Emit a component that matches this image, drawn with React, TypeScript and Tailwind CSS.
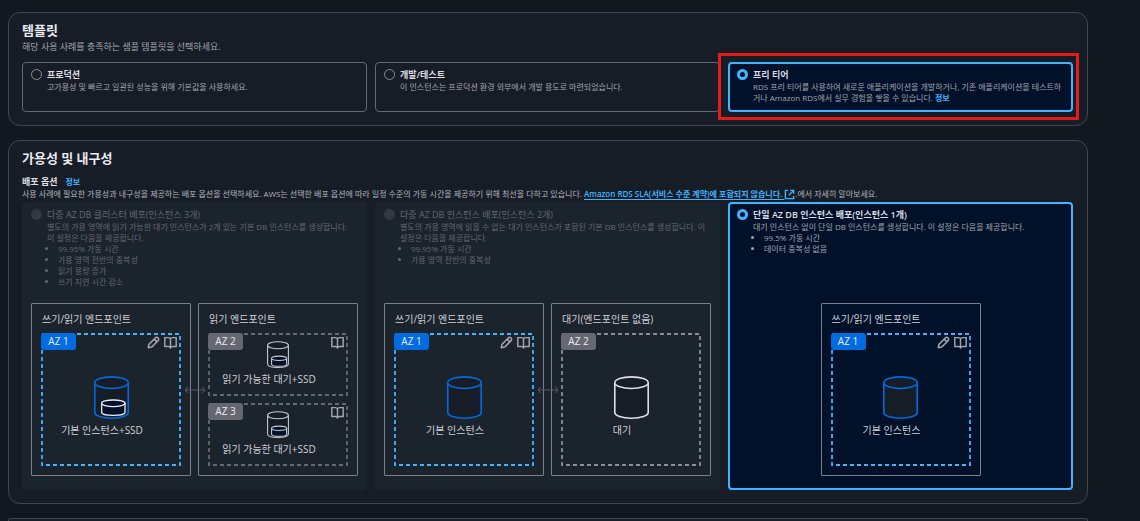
import type { ReactNode } from "react";

type Tone = "active" | "standby";

function Panel({ children }: { children: ReactNode }) {
  return (
    <section className="rounded-xl border border-[#424650] bg-[#161d26] pb-[13px] pl-[13px] pr-[14px] pt-2">
      {children}
    </section>
  );
}

function Tile({
  name,
  id,
  label,
  description,
  checked = false,
  disabled = false,
  highlighted = false,
  children,
}: {
  name: string;
  id: string;
  label: string;
  description: ReactNode;
  checked?: boolean;
  disabled?: boolean;
  highlighted?: boolean;
  children?: ReactNode;
}) {
  const box = checked
    ? "border-2 border-[#42b4ff] bg-[#001129] px-[7px] pt-1"
    : disabled
      ? "border border-[#1b232d] bg-[#1b232d] px-2 pb-px pt-[5px]"
      : "border border-[#656871] px-2 pb-px pt-[5px]";
  const radio = checked
    ? "border-[3px] border-[#42b4ff] bg-[#001129]"
    : disabled
      ? "border border-[#333843] bg-[#333843]"
      : "border border-[#8c8c94]";
  return (
    <div className={`relative flex flex-col rounded ${box}`}>
      <div className="flex gap-[5px]">
        <input
          type="radio"
          id={id}
          name={name}
          defaultChecked={checked}
          disabled={disabled}
          aria-describedby={`${id}-description`}
          className={`mt-px size-[11px] shrink-0 appearance-none rounded-full ${radio}`}
        />
        <div className="min-w-0">
          <label
            htmlFor={id}
            className={`block text-[9px] leading-[13px] ${disabled ? "text-[#656871]" : "font-semibold text-[#dedee3]"}`}
          >
            {label}
          </label>
          <div
            id={`${id}-description`}
            className={`text-[8px] leading-[11px] ${disabled ? "text-[#656871]" : "text-[#a4a4ad]"}`}
          >
            {description}
          </div>
        </div>
      </div>
      {children}
      {highlighted && (
        <div className="pointer-events-none absolute -bottom-[10px] -left-3 -right-2 -top-[11px] border-[3px] border-[#e31b1b]" />
      )}
    </div>
  );
}

function Bullets({ items }: { items: string[] }) {
  return (
    <ul className="list-disc pl-[11px]">
      {items.map((item) => (
        <li key={item}>{item}</li>
      ))}
    </ul>
  );
}

function PencilIcon() {
  return (
    <svg viewBox="0 0 16 16" className="size-[13px]" fill="none" stroke="#a4a4ad" strokeWidth="2" strokeLinejoin="round">
      <path d="M1.6 14.4l.9-4.3 7.7-7.7a2.2 2.2 0 0 1 3.4 3.4l-7.7 7.7zM8.8 3.8l3.4 3.4" />
    </svg>
  );
}

function BookIcon() {
  return (
    <svg viewBox="0 0 16 16" className="size-[13px]" fill="none" stroke="#a4a4ad" strokeWidth="1.8">
      <path d="M8 3.6C7.5 2.5 6.6 2 5.5 2H1v11h4.500c1.100 0 2 .4 2.500 1.500.5-1.100 1.400-1.500 2.500-1.500H15V2h-4.500C9.400 2 8.500 2.500 8 3.600zV15" />
    </svg>
  );
}

function ExternalIcon() {
  return (
    <svg viewBox="0 0 16 16" className="inline size-[11px] align-[-3px]" fill="none" stroke="#42b4ff" strokeWidth="2">
      <path d="M6 2H2v12h12v-4M9 2h5v5M14 2L7 9" />
    </svg>
  );
}

function Cylinder({ tone, ssd = false }: { tone: Tone; ssd?: boolean }) {
  return (
    <svg viewBox="0 0 35 43" className="h-[43px] w-[35px]" fill="#161d26" strokeWidth="1.6">
      <g stroke={tone === "active" ? "#006ce0" : "#dedee3"}>
        <path d="M.8 6.500V36.500C.8 39.600 8 42.200 17.500 42.200S34.200 39.600 34.200 36.500V6.500" />
        <ellipse cx="17.500" cy="6.700" rx="16.700" ry="5.800" />
      </g>
      {ssd && (
        <g stroke="#ebebf0" fill="#001129" strokeWidth="1.300">
          <path d="M7.700 27V36.500C7.700 38.200 13 39.400 19.300 39.400S31 38.200 31 36.500V27" />
          <ellipse cx="19.300" cy="27.300" rx="11.700" ry="3.300" />
        </g>
      )}
    </svg>
  );
}

function SmallCylinder() {
  return (
    <svg viewBox="0 0 22 27" className="h-[27px] w-[22px]" fill="#161d26" stroke="#c6c6cd" strokeWidth="1.100">
      <path d="M.6 4.200V23C.6 25 5 26.400 11 26.400S21.400 25 21.400 23V4.200" />
      <ellipse cx="11" cy="4.200" rx="10.400" ry="3.500" />
      <path d="M4.600 17V23.400C4.600 24.600 8 25.200 12.200 25.200S19.600 24.600 19.600 23.400V17" fill="#001129" />
      <ellipse cx="12.100" cy="17.300" rx="7.500" ry="2.200" fill="#001129" />
    </svg>
  );
}

function Zone({
  badge,
  caption,
  tone,
  writable = false,
  readable = false,
  compact = false,
  children,
}: {
  badge: string;
  caption: string;
  tone: Tone;
  writable?: boolean;
  readable?: boolean;
  compact?: boolean;
  children: ReactNode;
}) {
  return (
    <div className={`relative flex flex-col items-center ${compact ? "h-[63px] pt-2" : "h-[133px] pt-[43px]"}`}>
      <svg className="absolute inset-0 size-full overflow-visible" fill="none">
        <rect
          x="1"
          y="1"
          width="138"
          height={compact ? 61 : 131}
          stroke={tone === "active" ? "#42b4ff" : compact ? "#656871" : "#8c8c94"}
          strokeWidth="1.8"
          strokeDasharray="4 3"
        />
      </svg>
      <span
        className={`absolute left-0 top-0 h-[17px] w-[35px] rounded-[3px] text-center text-[10px] leading-[17px] text-[#ebebf0] ${tone === "active" ? "bg-[#006ce0]" : "bg-[#656871]"}`}
      >
        {badge}
      </span>
      <div className="absolute right-1 top-[3px] flex gap-1">
        {writable && <PencilIcon />}
        {readable && <BookIcon />}
      </div>
      {children}
      <p className="whitespace-nowrap pr-[18px] pt-1 text-[10px] leading-[14px] text-[#d0d0d6]">{caption}</p>
    </div>
  );
}

function Endpoint({ title, children }: { title: string; children: ReactNode }) {
  return (
    <div className="w-40 rounded-[1px] border border-[#7d7f88] px-[9px] pb-[9px]">
      <h4 className="whitespace-nowrap pb-[6px] pl-px pt-2 text-[10px] leading-[15px] text-[#d0d0d6]">{title}</h4>
      <div className="flex flex-col gap-[7px]">{children}</div>
    </div>
  );
}

function Diagram({ linked = false, children }: { linked?: boolean; children: ReactNode }) {
  return (
    <div className="mt-auto flex justify-center pb-3 pt-4">
      <div className="relative flex gap-[7px]">
        {children}
        {linked && (
          <svg
            viewBox="0 0 22 8"
            className="absolute left-1/2 top-1/2 h-2 w-[22px] -translate-x-1/2 -translate-y-1/2"
            fill="none"
            stroke="#5a5d67"
          >
            <path d="M1 4H21M4 1L1 4L4 7M18 1L21 4L18 7" />
          </svg>
        )}
      </div>
    </div>
  );
}

export default function App() {
  return (
    <main className="flex min-h-screen flex-col gap-[14px] bg-[#12181f] pl-2 pr-[52px] pt-3 font-['Open_Sans','Noto_Sans_CJK_KR',sans-serif]">
      <Panel>
        <h2 className="text-[13px] font-bold leading-[19px] text-[#ebebf0]">템플릿</h2>
        <p className="pb-[9px] text-[9px] leading-[13px] text-[#a4a4ad]">
          해당 사용 사례를 충족하는 샘플 템플릿을 선택하세요.
        </p>
        <div className="grid min-h-[50px] grid-cols-3 gap-2">
          <Tile
            name="template"
            id="production"
            label="프로덕션"
            description="고가용성 및 빠르고 일관된 성능을 위해 기본값을 사용하세요."
          />
          <Tile
            name="template"
            id="dev-test"
            label="개발/테스트"
            description="이 인스턴스는 프로덕션 환경 외부에서 개발 용도로 마련되었습니다."
          />
          <Tile
            name="template"
            id="free-tier"
            label="프리 티어"
            checked
            highlighted
            description={
              <>
                RDS 프리 티어를 사용하여 새로운 애플리케이션을 개발하거나, 기존 애플리케이션을 테스트하거나 Amazon
                RDS에서 실무 경험을 쌓을 수 있습니다.{" "}
                <a href="#free-tier-info" className="font-bold text-[#42b4ff]">
                  정보
                </a>
              </>
            }
          />
        </div>
      </Panel>

      <Panel>
        <h2 className="text-[13px] font-bold leading-[19px] text-[#ebebf0]">가용성 및 내구성</h2>
        <div className="flex items-center gap-2 pt-[7px] leading-[13px]">
          <h3 className="text-[9px] font-semibold text-[#dedee3]">배포 옵션</h3>
          <a href="#deployment-info" className="text-[8px] font-bold text-[#42b4ff]">
            정보
          </a>
        </div>
        <p className="pb-[2px] text-[8px] leading-[11px] text-[#b4b4bb]">
          사용 사례에 필요한 가용성과 내구성을 제공하는 배포 옵션을 선택하세요. AWS는 선택한 배포 옵션에 따라 일정 수준의
          가동 시간을 제공하기 위해 최선을 다하고 있습니다.{" "}
          <a href="#rds-sla" className="font-semibold text-[#42b4ff] underline underline-offset-2">
            Amazon RDS SLA(서비스 수준 계약)에 포함되지 않습니다. <ExternalIcon />
          </a>
          .에서 자세히 알아보세요.
        </p>
        <div className="grid min-h-[286px] grid-cols-3 gap-2">
          <Tile
            name="deployment"
            id="multi-az-cluster"
            label="다중 AZ DB 클러스터 배포(인스턴스 3개)"
            disabled
            description={
              <>
                별도의 가용 영역에 읽기 가능한 대기 인스턴스가 2개 있는 기본 DB 인스턴스를 생성합니다. 이{"\u00a0"}설정은
                다음을 제공합니다.
                <Bullets items={["99.95% 가동 시간", "가용 영역 전반의 중복성", "읽기 용량 증가", "쓰기 지연 시간 감소"]} />
              </>
            }
          >
            <Diagram linked>
              <Endpoint title="쓰기/읽기 엔드포인트">
                <Zone badge="AZ 1" caption="기본 인스턴스+SSD" tone="active" writable readable>
                  <Cylinder tone="active" ssd />
                </Zone>
              </Endpoint>
              <Endpoint title="읽기 엔드포인트">
                <Zone badge="AZ 2" caption="읽기 가능한 대기+SSD" tone="standby" readable compact>
                  <SmallCylinder />
                </Zone>
                <Zone badge="AZ 3" caption="읽기 가능한 대기+SSD" tone="standby" readable compact>
                  <SmallCylinder />
                </Zone>
              </Endpoint>
            </Diagram>
          </Tile>
          <Tile
            name="deployment"
            id="multi-az-instance"
            label="다중 AZ DB 인스턴스 배포(인스턴스 2개)"
            disabled
            description={
              <>
                별도의 가용 영역에 읽을 수 없는 대기 인스턴스가 포함된 기본 DB 인스턴스를 생성합니다. 이 설정은 다음을
                제공합니다.
                <Bullets items={["99.95% 가동 시간", "가용 영역 전반의 중복성"]} />
              </>
            }
          >
            <Diagram linked>
              <Endpoint title="쓰기/읽기 엔드포인트">
                <Zone badge="AZ 1" caption="기본 인스턴스" tone="active" writable readable>
                  <Cylinder tone="active" />
                </Zone>
              </Endpoint>
              <Endpoint title="대기(엔드포인트 없음)">
                <Zone badge="AZ 2" caption="대기" tone="standby">
                  <Cylinder tone="standby" />
                </Zone>
              </Endpoint>
            </Diagram>
          </Tile>
          <Tile
            name="deployment"
            id="single-az"
            label="단일 AZ DB 인스턴스 배포(인스턴스 1개)"
            checked
            description={
              <>
                대기 인스턴스 없이 단일 DB 인스턴스를 생성합니다. 이 설정은 다음을 제공합니다.
                <Bullets items={["99.5% 가동 시간", "데이터 중복성 없음"]} />
              </>
            }
          >
            <Diagram>
              <Endpoint title="쓰기/읽기 엔드포인트">
                <Zone badge="AZ 1" caption="기본 인스턴스" tone="active" writable readable>
                  <Cylinder tone="active" />
                </Zone>
              </Endpoint>
            </Diagram>
          </Tile>
        </div>
      </Panel>

      <section className="flex-1 rounded-t-xl border border-b-0 border-[#424650] bg-[#161d26]" />
    </main>
  );
}
